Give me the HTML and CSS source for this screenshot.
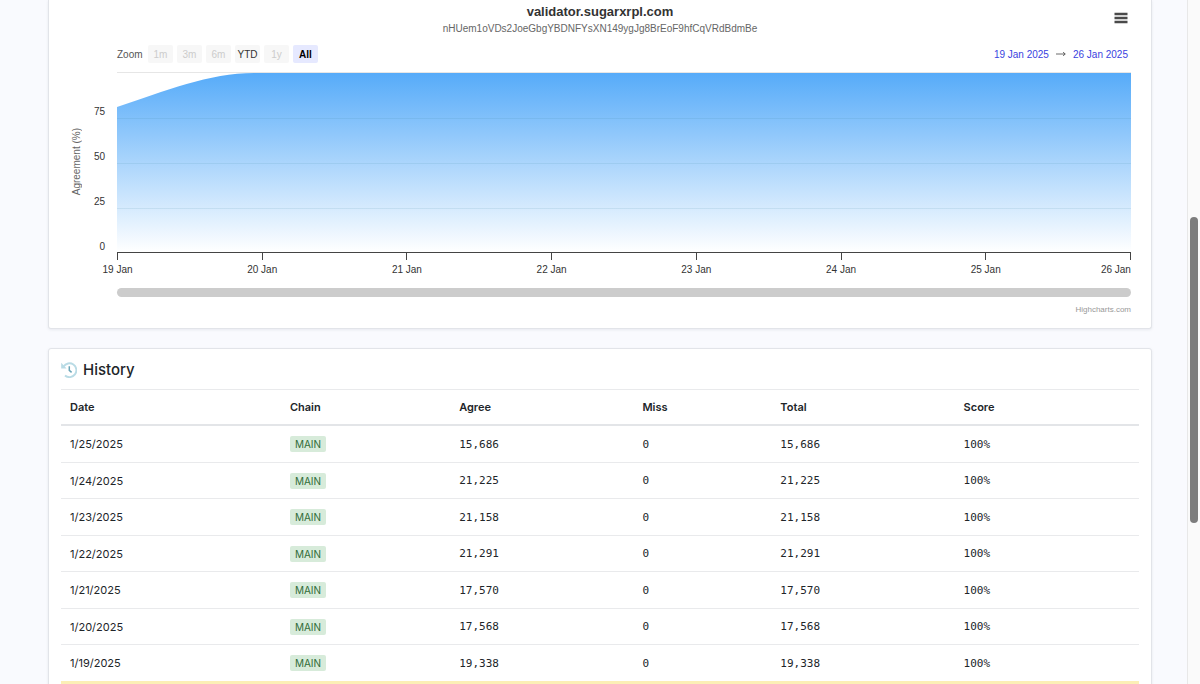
FILE: index.html
```html
<!DOCTYPE html>
<html lang="en">
<head>
<meta charset="utf-8">
<title>validator.sugarxrpl.com</title>
<link rel="stylesheet" href="styles.css">
</head>
<body>
<main class="page">
  <section class="card chart">
    <header class="chart-header">
      <div class="chart-titles">
        <h1 class="chart-title">validator.sugarxrpl.com</h1>
        <p class="chart-subtitle">nHUem1oVDs2JoeGbgYBDNFYsXN149ygJg8BrEoF9hfCqVRdBdmBe</p>
      </div>
      <button class="menu" type="button" aria-label="Chart menu">
        <svg class="menu-icon" viewBox="0 0 14 12" aria-hidden="true"><path d="M0.5 2h13M0.5 6h13M0.5 10h13" stroke="#4a4a4a" stroke-width="2.5"/></svg>
      </button>
    </header>
    <div class="controls">
      <div class="zoom">
        <span class="zoom-label">Zoom</span>
        <button class="range" type="button" disabled>1m</button>
        <button class="range" type="button" disabled>3m</button>
        <button class="range" type="button" disabled>6m</button>
        <button class="range" type="button">YTD</button>
        <button class="range" type="button" disabled>1y</button>
        <button class="range active" type="button">All</button>
      </div>
      <div class="dates">
        <button class="date" type="button">19 Jan 2025</button>
        <span class="arrow">
          <svg class="arrow-icon" viewBox="0 0 10 6" aria-hidden="true"><path d="M0 3h9M7 1.2 9.3 3 7 4.8" fill="none" stroke="#444" stroke-width="0.8"/></svg>
        </span>
        <button class="date" type="button">26 Jan 2025</button>
      </div>
    </div>
    <div class="plot-area">
      <div class="y-title">Agreement (%)</div>
      <div class="y-labels"><span>75</span><span>50</span><span>25</span><span>0</span></div>
      <svg class="plot" viewBox="0 0 1014 180" preserveAspectRatio="none" role="img" aria-label="Agreement over time">
        <defs>
          <linearGradient id="fill" x1="0" y1="0" x2="0" y2="1">
            <stop offset="0" stop-color="#56abf9"/>
            <stop offset="1" stop-color="#ffffff"/>
          </linearGradient>
        </defs>
        <path d="M0 0.5H1014" stroke="#e6e6e6"/>
        <path d="M0 35C48 19 92 1 137 1H1014V180H0Z" fill="url(#fill)"/>
        <path d="M0 46.5H1014M0 91.5H1014M0 136.5H1014" stroke="#3c82a0" stroke-opacity="0.12"/>
      </svg>
    </div>
    <div class="x-axis">
      <span class="tick">19 Jan</span><span class="tick">20 Jan</span><span class="tick">21 Jan</span><span class="tick">22 Jan</span><span class="tick">23 Jan</span><span class="tick">24 Jan</span><span class="tick">25 Jan</span><span class="tick">26 Jan</span>
    </div>
    <div class="chart-scroll"></div>
    <a class="credit" href="#">Highcharts.com</a>
  </section>

  <section class="card history">
    <h2 class="history-title">
      <svg class="history-icon" viewBox="0 0 16 16" aria-hidden="true">
        <path d="M2.6 4.6A6.9 6.9 0 1 1 4 13.5" fill="none" stroke="#b9dbe5" stroke-width="1.9"/>
        <path d="M0.2 0.8v5.6h5.4z" fill="#b9dbe5"/>
        <path d="M8.3 4.2v4.2l2.3 2" fill="none" stroke="#6aa5b7" stroke-width="1.5"/>
      </svg>
      History
    </h2>
    <table class="table">
      <colgroup><col class="c-date"><col class="c-chain"><col class="c-agree"><col class="c-miss"><col class="c-total"><col class="c-score"></colgroup>
      <thead>
        <tr><th>Date</th><th>Chain</th><th>Agree</th><th>Miss</th><th>Total</th><th>Score</th></tr>
      </thead>
      <tbody>
        <tr><td>1/25/2025</td><td><span class="badge">MAIN</span></td><td class="num">15,686</td><td class="num">0</td><td class="num">15,686</td><td class="num">100%</td></tr>
        <tr><td>1/24/2025</td><td><span class="badge">MAIN</span></td><td class="num">21,225</td><td class="num">0</td><td class="num">21,225</td><td class="num">100%</td></tr>
        <tr><td>1/23/2025</td><td><span class="badge">MAIN</span></td><td class="num">21,158</td><td class="num">0</td><td class="num">21,158</td><td class="num">100%</td></tr>
        <tr><td>1/22/2025</td><td><span class="badge">MAIN</span></td><td class="num">21,291</td><td class="num">0</td><td class="num">21,291</td><td class="num">100%</td></tr>
        <tr><td>1/21/2025</td><td><span class="badge">MAIN</span></td><td class="num">17,570</td><td class="num">0</td><td class="num">17,570</td><td class="num">100%</td></tr>
        <tr><td>1/20/2025</td><td><span class="badge">MAIN</span></td><td class="num">17,568</td><td class="num">0</td><td class="num">17,568</td><td class="num">100%</td></tr>
        <tr><td>1/19/2025</td><td><span class="badge">MAIN</span></td><td class="num">19,338</td><td class="num">0</td><td class="num">19,338</td><td class="num">100%</td></tr>
      </tbody>
    </table>
    <div class="highlight"></div>
  </section>
</main>
<div class="scrollbar" aria-hidden="true"><div class="thumb"></div></div>
</body>
</html>
```
FILE: styles.css
```css
* { box-sizing: border-box; }

body {
  display: flex;
  height: 100vh;
  margin: 0;
  overflow: hidden;
  background: #f9fafe;
  color: #212529;
  font-family: Inter, "Liberation Sans", sans-serif;
  font-size: 11px;
}

button {
  padding: 0;
  border: 0;
  background: none;
  font: inherit;
  color: inherit;
}

.page {
  flex: 1;
  min-width: 0;
  overflow: hidden;
  padding: 0 35px 0 48px;
}

.card {
  border: 1px solid #e2e4e9;
  border-radius: 3px;
  background: #fff;
  box-shadow: 0 1px 3px rgba(30, 35, 60, 0.08);
}

/* Chart */
.chart {
  border-top: 0;
  border-radius: 0 0 3px 3px;
  padding: 4px 20px 13px;
  color: #333;
  font-family: "Liberation Sans", Arial, sans-serif;
  font-size: 10px;
}

.chart-header {
  display: grid;
  grid-template-columns: 1fr auto 1fr;
  align-items: center;
}

.chart-titles { grid-column: 2; text-align: center; }
.chart-title { margin: 0; font-size: 13px; line-height: 16px; }
.chart-subtitle { margin: 2px 0 0; color: #666; line-height: 14px; }
.menu { justify-self: end; align-self: start; margin: 8px 3px 0 0; }
.menu-icon { display: block; width: 14px; height: 12px; }

.controls {
  display: flex;
  justify-content: space-between;
  margin: 9px 0 9px 48px;
}

.zoom { display: flex; align-items: center; gap: 4px; }
.zoom-label { width: 27px; color: #555; }
.range { width: 25px; height: 18px; border-radius: 2px; background: #f7f7f7; color: #333; }
.range:disabled { color: #ccc; }
.range.active { background: #e6e9ff; color: #000; font-weight: bold; }

.dates { display: flex; align-items: center; padding-right: 3px; }
.date { color: #3a3fe0; }
.arrow { display: flex; justify-content: center; width: 24px; }
.arrow-icon { width: 10px; height: 6px; }

.plot-area {
  display: grid;
  grid-template-columns: 16px 20px 1fr;
  height: 180px;
}

.y-title {
  place-self: center;
  color: #666;
  line-height: 14px;
  white-space: nowrap;
  writing-mode: vertical-rl;
  transform: rotate(180deg);
}

.y-labels {
  display: flex;
  flex-direction: column;
  justify-content: flex-end;
  gap: 31px;
  line-height: 14px;
  text-align: right;
}

.y-labels span:last-child { margin-bottom: -2px; }
.plot { width: calc(100% - 12px); height: 180px; margin-left: 12px; }

.x-axis {
  display: flex;
  justify-content: space-between;
  margin-left: 48px;
  border-top: 1px solid #444;
}

.tick {
  display: flex;
  flex-direction: column;
  align-items: center;
  width: 1px;
  line-height: 14px;
  white-space: nowrap;
}

.tick::before {
  width: 1px;
  height: 7px;
  margin-bottom: 3px;
  background: #444;
  content: "";
}

.tick:last-child { align-items: flex-end; }

.chart-scroll {
  height: 9px;
  margin: 11px 0 8px 48px;
  border-radius: 5px;
  background: #ccc;
}

.credit {
  display: block;
  color: #999;
  font-size: 8px;
  line-height: 10px;
  text-align: right;
  text-decoration: none;
}

/* History */
.history { margin-top: 19px; padding: 11px 12px; }

.history-title {
  display: flex;
  align-items: center;
  gap: 6px;
  margin: 0;
  padding-bottom: 9px;
  font-size: 15px;
  font-weight: 500;
  line-height: 20px;
}

.history-icon { width: 16px; height: 16px; }

.table {
  width: 100%;
  border-top: 1px solid #e9eaec;
  border-spacing: 0;
  table-layout: fixed;
}

.table th {
  height: 36px;
  padding: 0 9px;
  border-bottom: 2px solid #e3e5e8;
  font-weight: 600;
  text-align: left;
}

.table td {
  height: 37px;
  padding: 0 9px;
  border-bottom: 1px solid #e9eaec;
}

.table tr:nth-child(even) td { height: 36px; }
.table tr:last-child td { height: 36px; border-bottom: 0; }
.table .num { font-family: "DejaVu Sans Mono", monospace; }

.c-date { width: 20.4%; }
.c-chain { width: 15.7%; }
.c-agree { width: 17%; }
.c-miss { width: 12.8%; }
.c-total { width: 17%; }
.c-score { width: 17.1%; }

.badge {
  display: inline-block;
  padding: 0 5px;
  border-radius: 2px;
  background: #d7ebda;
  color: #2f6b38;
  font-size: 10px;
  line-height: 16px;
}

.highlight { height: 36px; background: #fcefb6; }

/* Window scrollbar */
.scrollbar {
  display: grid;
  grid-template-rows: 217fr 306fr 161fr;
  width: 13px;
  padding: 0 2px;
  border-left: 1px solid #e8e8e8;
  background: #fafafa;
}

.thumb { grid-row: 2; border-radius: 4px; background: #7d7d7d; }
```
